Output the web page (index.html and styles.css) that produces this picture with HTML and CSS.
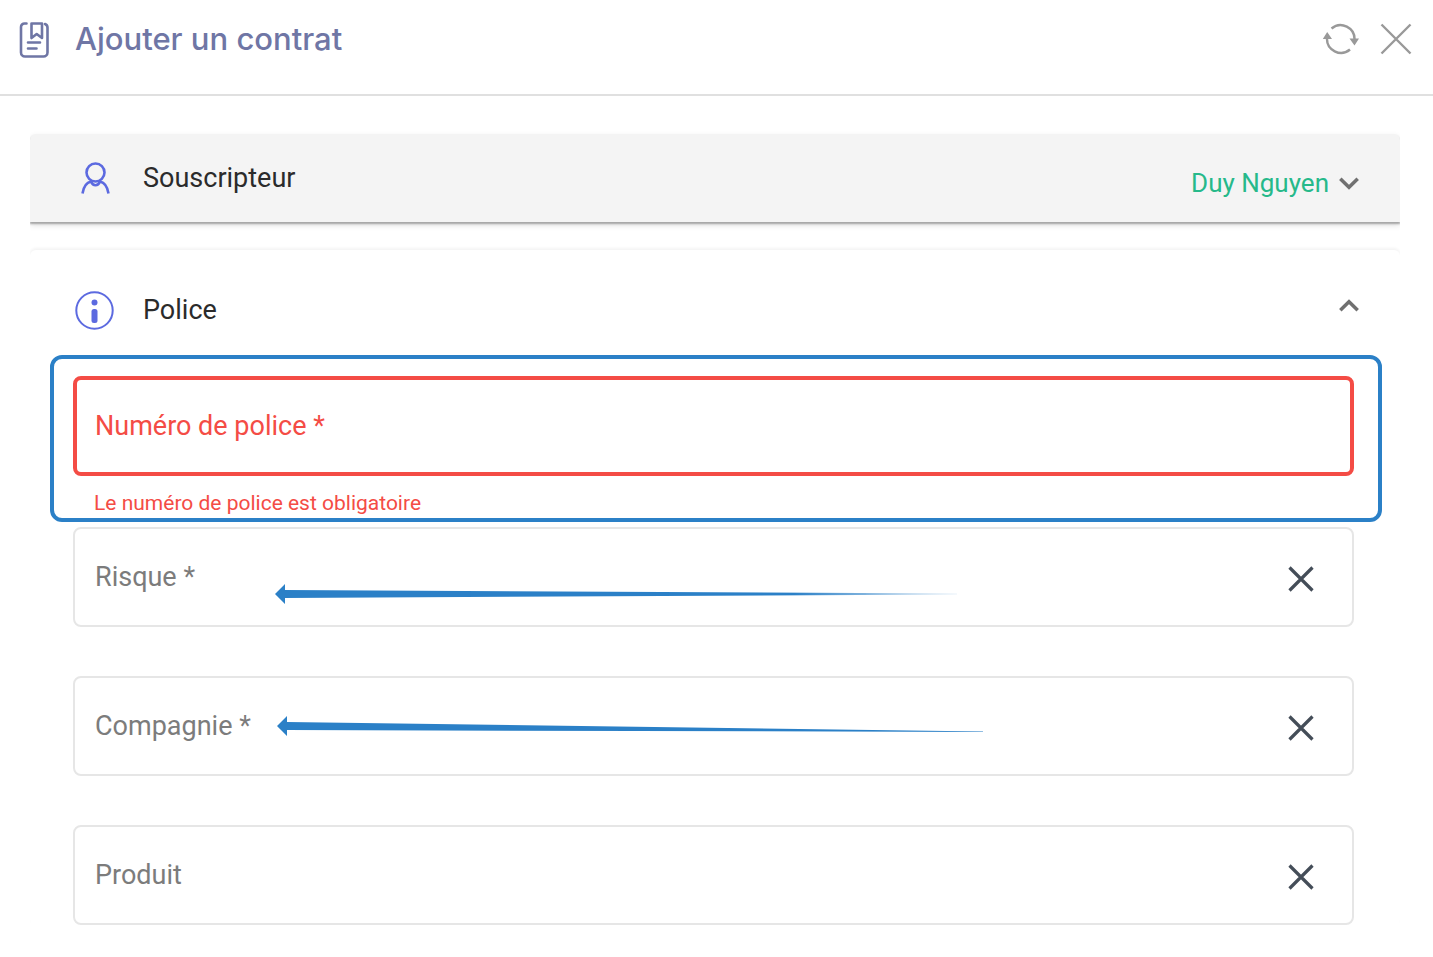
FILE: index.html
```html
<!DOCTYPE html>
<html lang="fr">
<head>
<meta charset="utf-8">
<meta name="viewport" content="width=device-width, initial-scale=1">
<title>Ajouter un contrat</title>
<link rel="stylesheet" href="styles.css">
</head>
<body>
<header class="header">
  <svg class="header-icon" viewBox="0 0 30 38" fill="none" stroke="currentColor" stroke-width="2.600" stroke-linecap="round" stroke-linejoin="round" aria-hidden="true">
    <path d="M7.500 3.500H5.500A3.500 3.500 0 0 0 2 7V32.500A4 4 0 0 0 6 36.500H24.500A4 4 0 0 0 28.500 32.500V8A4 4 0 0 0 26 4"/>
    <path d="M12.500 3.500H23V18L17.700 14L12.500 18Z"/>
    <path d="M9 22.500H21M9 28.500H17.500"/>
  </svg>
  <h1 class="title">Ajouter un contrat</h1>
  <div class="actions">
    <button class="icon-button" type="button" aria-label="Actualiser">
      <svg class="refresh-icon" viewBox="0 0 38 34" fill="none" stroke="currentColor" stroke-width="2.400" aria-hidden="true">
        <path d="M9.500 6.500A14 14 0 0 1 32.500 18M28 27.500A14 14 0 0 1 5 16"/>
        <path d="M27.500 16.500H37L32.500 23.500ZM.800 17H10L5.200 10Z" fill="currentColor" stroke="none"/>
      </svg>
    </button>
    <button class="icon-button" type="button" aria-label="Fermer">
      <svg class="close-icon" viewBox="0 0 32 32" fill="none" stroke="currentColor" stroke-width="2.400" aria-hidden="true"><path d="M1.500 1.500L30.500 30.500M30.500 1.500L1.500 30.500"/></svg>
    </button>
  </div>
</header>
<main class="content">
  <section class="panel panel-closed">
    <button class="panel-header" type="button" aria-expanded="false">
      <span class="panel-icon">
        <svg class="person-icon" viewBox="0 0 30 34" fill="none" stroke="currentColor" stroke-width="2.600" aria-hidden="true">
          <circle cx="15.500" cy="11.500" r="9"/>
          <path d="M2.500 32.500C3.500 26 6.500 21.500 11 20.500C13 25.500 18 25.500 20 20.500C24.500 21.500 27.500 26 28.500 32.500"/>
        </svg>
      </span>
      <span class="panel-title">Souscripteur</span>
      <span class="panel-value">Duy Nguyen</span>
      <svg class="chevron" viewBox="0 0 20 13" fill="none" stroke="currentColor" stroke-width="3.500" aria-hidden="true"><path d="M1.300 1.800L10 10.300L18.700 1.800"/></svg>
    </button>
  </section>
  <section class="panel panel-open">
    <button class="panel-header" type="button" aria-expanded="true">
      <span class="panel-icon">
        <svg class="info-icon" viewBox="0 0 40 40" aria-hidden="true">
          <circle cx="19.500" cy="20.500" r="18.200" fill="none" stroke="currentColor" stroke-width="2"/>
          <circle cx="19.500" cy="12.500" r="3" fill="currentColor"/>
          <rect x="16.500" y="19" width="6" height="14" rx="2.500" fill="currentColor"/>
        </svg>
      </span>
      <span class="panel-title">Police</span>
      <svg class="chevron" viewBox="0 0 20 13" fill="none" stroke="currentColor" stroke-width="3.500" aria-hidden="true"><path d="M1.300 11.200L10 2.700L18.700 11.200"/></svg>
    </button>
    <form class="form">
      <div class="highlight">
        <div class="field field-error">
          <label class="label" for="numero">Numéro de police *</label>
          <input class="input" id="numero" type="text" required aria-describedby="numero-error">
        </div>
        <p class="error" id="numero-error">Le numéro de police est obligatoire</p>
      </div>
      <div class="field">
        <label class="label" for="risque">Risque *</label>
        <input class="input" id="risque" type="text" required>
        <button class="clear" type="button" aria-label="Effacer le risque">
          <svg class="clear-icon" viewBox="0 0 26 26" fill="none" stroke="currentColor" stroke-width="3.200" aria-hidden="true"><path d="M1.500 1.500L24.500 24.500M24.500 1.500L1.500 24.500"/></svg>
        </button>
        <svg class="arrow arrow-risque" viewBox="0 0 682 20" aria-hidden="true">
          <defs><linearGradient id="fade-a" gradientUnits="userSpaceOnUse" x1="0" y1="0" x2="682" y2="0"><stop offset=".760" stop-color="#2b80c7"/><stop offset="1" stop-color="#2b80c7" stop-opacity=".1"/></linearGradient></defs>
          <path d="M0 10L10 0V6L682 9.500V10.500L10 14V20Z" fill="url(#fade-a)"/>
        </svg>
      </div>
      <div class="field">
        <label class="label" for="compagnie">Compagnie *</label>
        <input class="input" id="compagnie" type="text" required>
        <button class="clear" type="button" aria-label="Effacer la compagnie">
          <svg class="clear-icon" viewBox="0 0 26 26" fill="none" stroke="currentColor" stroke-width="3.200" aria-hidden="true"><path d="M1.500 1.500L24.500 24.500M24.500 1.500L1.500 24.500"/></svg>
        </button>
        <svg class="arrow arrow-compagnie" viewBox="0 0 706 20" aria-hidden="true">
          <path d="M0 10L10 0V6L706 15.500V16L10 14V20Z" fill="#2b80c7"/>
        </svg>
      </div>
      <div class="field">
        <label class="label" for="produit">Produit</label>
        <input class="input" id="produit" type="text">
        <button class="clear" type="button" aria-label="Effacer le produit">
          <svg class="clear-icon" viewBox="0 0 26 26" fill="none" stroke="currentColor" stroke-width="3.200" aria-hidden="true"><path d="M1.500 1.500L24.500 24.500M24.500 1.500L1.500 24.500"/></svg>
        </button>
      </div>
    </form>
  </section>
</main>
</body>
</html>
```
FILE: styles.css
```css
* { box-sizing: border-box; }

body {
  margin: 0;
  background: #fff;
  color: #2b2b2b;
  font-family: Roboto, "Liberation Sans", sans-serif;
}

button {
  border: 0;
  padding: 0;
  background: none;
  color: inherit;
  font: inherit;
  cursor: pointer;
}

svg { display: block; }

.header {
  display: flex;
  align-items: center;
  padding: 19px 21px 35px 19px;
  border-bottom: 2px solid #e0e0e0;
  color: #6f76a5;
}

.header-icon { width: 30px; height: 38px; }

.title {
  flex: 1;
  margin: 0 0 0 26px;
  font-family: Inter, "Open Sans", sans-serif;
  font-size: 31px;
  font-weight: 500;
  line-height: 40px;
}

.actions {
  display: flex;
  align-items: center;
  gap: 20px;
  color: #999;
}

.refresh-icon { width: 38px; height: 34px; }
.close-icon { width: 32px; height: 32px; }

.content {
  display: flex;
  flex-direction: column;
  gap: 28px;
  padding: 38px 33px 32px 30px;
}

.panel { border-radius: 6px; }

.panel-closed {
  border-radius: 6px 6px 0 0;
  background: #f4f4f4;
  box-shadow: 0 2px 2px #a6a6a6, 0 3px 6px #ddd;
  clip-path: inset(-16px 0);
}

.panel-open {
  box-shadow: 0 -2px 3px #f4f4f4;
  clip-path: inset(-6px 0 0);
}

.panel-header {
  display: flex;
  align-items: center;
  width: 100%;
  height: 88px;
  padding: 0 41px 0 45px;
  text-align: left;
}

.panel-open .panel-header { height: 120px; }

.panel-icon {
  display: flex;
  justify-content: center;
  width: 40px;
  margin-right: 28px;
  color: #5c6ae0;
}

.person-icon { width: 30px; height: 34px; }
.info-icon { width: 40px; height: 40px; }

.panel-title {
  flex: 1;
  font-size: 27px;
  line-height: 32px;
}

.panel-value {
  margin: 10px 10px 0 0;
  color: #26b98a;
  font-size: 26px;
  line-height: 32px;
}

.chevron { width: 20px; height: 13px; color: #707070; }
.panel-closed .chevron { margin-top: 10px; }
.panel-open .chevron { margin-bottom: 9px; }

.form {
  display: flex;
  flex-direction: column;
  gap: 49px;
  padding: 0 46px 0 43px;
}

.field {
  position: relative;
  display: flex;
  align-items: center;
  height: 100px;
  padding: 0 38px 0 20px;
  border: 2px solid #e6e6e6;
  border-radius: 8px;
}

.field-error {
  padding-left: 18px;
  border: 4px solid #f44c45;
}

.label {
  color: #7c7c7c;
  font-size: 27px;
  line-height: 32px;
}

.field-error .label, .error { color: #f44c45; }

.input {
  flex: 1;
  min-width: 0;
  height: 100%;
  border: 0;
  outline: 0;
  background: none;
  font: inherit;
  font-size: 27px;
}

.clear { margin-top: 4px; color: #444d58; }
.clear-icon { width: 26px; height: 26px; }

/* Callout frame around the mandatory field */
.highlight {
  margin: -15px -28px -44px -23px;
  padding: 17px 24px 2px 19px;
  border: 4px solid #2b80c7;
  border-radius: 12px;
}

.error {
  margin: 14px 0 0 21px;
  font-size: 21px;
  line-height: 26px;
}

/* Callout arrows drawn over the fields */
.arrow { position: absolute; height: 20px; pointer-events: none; }
.arrow-risque { top: 55px; left: 200px; width: 682px; }
.arrow-compagnie { top: 38px; left: 202px; width: 706px; }
```
